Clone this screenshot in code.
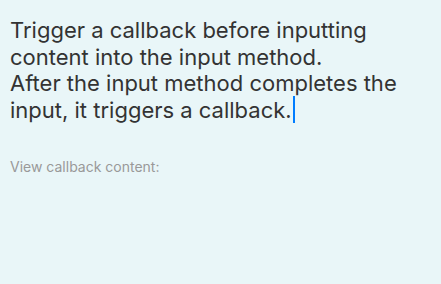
export default function App() {
  return (
    <div className="h-[284px] w-[441px] bg-[#e9f6f8] px-[10px] pt-[17px] font-['Inter',sans-serif]">
      <div className="text-[22px] leading-[26.5px] text-[#333333]">
        <p>Trigger a callback before inputting</p>
        <p>content into the input method.</p>
        <p>After the input method completes the</p>
        <p>
          input, it triggers a callback.
          <span className="-mt-[9px] -mb-[5px] ml-[1px] inline-block h-[27px] w-[2px] bg-[#007dff] align-baseline" />
        </p>
      </div>
      <p className="mt-[35px] text-[14px] leading-[18px] text-[#999999]">View callback content:</p>
    </div>
  );
}
